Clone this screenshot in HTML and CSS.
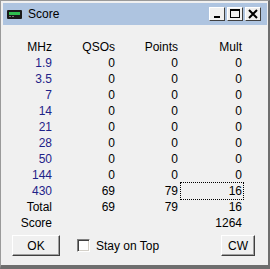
FILE: index.html
```html
<!DOCTYPE html>
<html>
<head>
<meta charset="utf-8">
<link rel="stylesheet" href="styles.css">
</head>
<body>
<div class="window">
  <div class="titlebar">
    <div class="title">
      <svg class="app-icon" width="15" height="9" viewBox="0 0 15 9">
        <rect x="0" y="0" width="15" height="9" rx="1" fill="#1a1a1a"/>
        <rect x="2" y="2" width="11" height="3" fill="#2fbf4f"/>
        <rect x="2" y="6" width="2" height="1" fill="#7a7a7a"/>
        <rect x="5" y="6" width="2" height="1" fill="#7a7a7a"/>
      </svg>
      <span class="title-text">Score</span>
    </div>
    <div class="caption-buttons">
      <div class="cap-btn"><svg width="14" height="12" viewBox="0 0 14 12"><rect x="4" y="8" width="6" height="2" fill="#000"/></svg></div>
      <div class="cap-btn"><svg width="14" height="12" viewBox="0 0 14 12"><rect x="2.5" y="1.5" width="9" height="8" fill="none" stroke="#000"/><rect x="2" y="1" width="10" height="2" fill="#000"/></svg></div>
      <div class="cap-btn close"><svg width="14" height="12" viewBox="0 0 14 12"><path d="M3 2 L11 10 M11 2 L3 10" stroke="#000" stroke-width="2"/></svg></div>
    </div>
  </div>
  <div class="body">
    <div class="score-grid">
      <div class="cell">MHz</div><div class="cell">QSOs</div><div class="cell">Points</div><div class="cell">Mult</div>
      <div class="cell band">1.9</div><div class="cell">0</div><div class="cell">0</div><div class="cell">0</div>
      <div class="cell band">3.5</div><div class="cell">0</div><div class="cell">0</div><div class="cell">0</div>
      <div class="cell band">7</div><div class="cell">0</div><div class="cell">0</div><div class="cell">0</div>
      <div class="cell band">14</div><div class="cell">0</div><div class="cell">0</div><div class="cell">0</div>
      <div class="cell band">21</div><div class="cell">0</div><div class="cell">0</div><div class="cell">0</div>
      <div class="cell band">28</div><div class="cell">0</div><div class="cell">0</div><div class="cell">0</div>
      <div class="cell band">50</div><div class="cell">0</div><div class="cell">0</div><div class="cell">0</div>
      <div class="cell band">144</div><div class="cell">0</div><div class="cell">0</div><div class="cell">0</div>
      <div class="cell band">430</div><div class="cell">69</div><div class="cell">79</div><div class="cell focus">16</div>
      <div class="cell">Total</div><div class="cell">69</div><div class="cell">79</div><div class="cell">16</div>
      <div class="cell">Score</div><div class="cell"></div><div class="cell"></div><div class="cell">1264</div>
    </div>
    <div class="footer">
      <div class="btn ok">OK</div>
      <label class="check"><span class="box"></span><span>Stay on Top</span></label>
      <div class="btn cw">CW</div>
    </div>
  </div>
</div>
</body>
</html>
```
FILE: styles.css
```css
html, body {
  margin: 0;
  padding: 0;
}
body {
  width: 270px;
  height: 269px;
  overflow: hidden;
  font-family: "Liberation Sans", Arial, sans-serif;
  font-size: 12px;
  color: #000;
}
.window {
  box-sizing: border-box;
  width: 270px;
  height: 269px;
  background: #f0f0f0;
  border: 1px solid #9a9a9a;
  border-bottom: 4px solid #6e6e6e;
  border-right: 2px solid #6e6e6e;
  display: flex;
  flex-direction: column;
  padding: 0 1px 0 2px;
}
.titlebar {
  height: 22px;
  margin-top: 2px;
  background: #aec4e0;
  display: flex;
  align-items: center;
  justify-content: space-between;
  padding: 0 6px 0 4px;
}
.title {
  display: flex;
  align-items: center;
  gap: 6px;
}
.app-icon { display: block; }
.title-text {
  font-size: 12px;
  color: #000;
}
.caption-buttons {
  display: flex;
  gap: 2px;
}
.cap-btn {
  box-sizing: border-box;
  width: 16px;
  height: 14px;
  background: #f0f0f0;
  border-top: 1px solid #fff;
  border-left: 1px solid #fff;
  border-right: 1px solid #404040;
  border-bottom: 1px solid #404040;
  display: flex;
  align-items: center;
  justify-content: center;
}
.cap-btn svg { display: block; }
.body {
  flex: 1;
  display: flex;
  flex-direction: column;
  padding: 14px 0 0 2px;
}
.score-grid {
  display: grid;
  grid-template-columns: 47px 63px 63px 64px;
  grid-auto-rows: 16px;
}
.cell {
  text-align: right;
  line-height: 16px;
  white-space: nowrap;
}
.band { color: #1e2288; }
.focus {
  outline: 1px dotted #000;
  outline-offset: 0;
  margin-left: 3px;
  margin-right: -1px;
  padding-right: 1px;
}
.footer {
  display: flex;
  align-items: center;
  margin-top: 4px;
  padding: 0 12px 0 7px;
}
.btn {
  box-sizing: border-box;
  height: 21px;
  background: #f0f0f0;
  border-top: 1px solid #fff;
  border-left: 1px solid #fff;
  border-right: 1px solid #404040;
  border-bottom: 1px solid #404040;
  box-shadow: inset -1px -1px 0 #a0a0a0;
  display: flex;
  align-items: center;
  justify-content: center;
}
.ok { width: 48px; }
.cw { width: 34px; margin-left: auto; }
.check {
  display: flex;
  align-items: center;
  gap: 6px;
  margin-left: 17px;
}
.box {
  box-sizing: border-box;
  width: 13px;
  height: 13px;
  background: #fff;
  border-top: 1px solid #808080;
  border-left: 1px solid #808080;
  border-right: 1px solid #fff;
  border-bottom: 1px solid #fff;
  box-shadow: inset 1px 1px 0 #404040, inset -1px -1px 0 #d4d0c8;
}
```
